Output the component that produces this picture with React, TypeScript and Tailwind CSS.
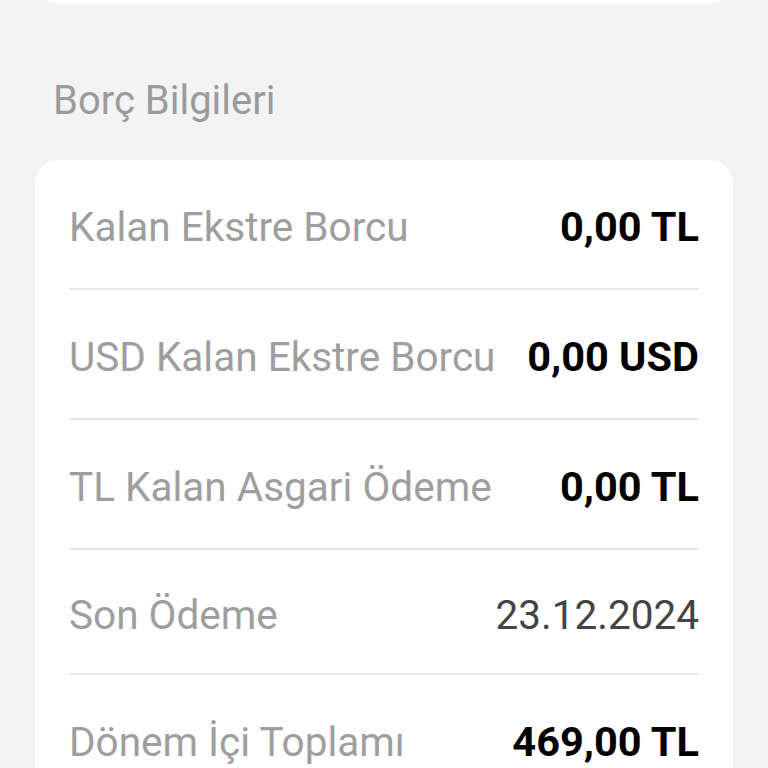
import React from "react";

type Row = { label: string; value: string; kind: "bold" | "plain"; h: string };

const rows: Row[] = [
  { label: "Kalan Ekstre Borcu", value: "0,00 TL", kind: "bold", h: "h-[128px]" },
  { label: "USD Kalan Ekstre Borcu", value: "0,00 USD", kind: "bold", h: "h-[128px]" },
  { label: "TL Kalan Asgari Ödeme", value: "0,00 TL", kind: "bold", h: "h-[128px]" },
  { label: "Son Ödeme", value: "23.12.2024", kind: "plain", h: "h-[123px]" },
  { label: "Dönem İçi Toplamı", value: "469,00 TL", kind: "bold", h: "h-[128px]" },
];

export default function App() {
  return (
    <div
      className="min-h-screen w-full overflow-hidden bg-[#f3f3f3]"
      style={{ fontFamily: "Roboto, 'Noto Sans', sans-serif" }}
    >
      <div className="mx-[35px] -mt-[40px] h-[43px] rounded-[24px] bg-white" />
      <div className="mt-[74px] pl-[53px] text-[40px] leading-[48px] text-[#9b9b9b]">
        Borç Bilgileri
      </div>
      <div className="mx-[35px] mt-[35px] rounded-[24px] bg-white px-[34px]">
        {rows.map((r, i) => (
          <div key={i}>
            {i > 0 && <div className="h-[2px] bg-[#e6e6e6]" />}
            <div className={`flex items-center justify-between pt-[6px] ${r.h}`}>
              <span className="whitespace-nowrap text-[40.5px] leading-[48px] text-[#9e9e9e]">
                {r.label}
              </span>
              {r.kind === "bold" ? (
                <span className="whitespace-nowrap text-[41.5px] font-bold leading-[50px] text-black">
                  {r.value}
                </span>
              ) : (
                <span className="whitespace-nowrap text-[40.5px] leading-[48px] text-[#444444]">
                  {r.value}
                </span>
              )}
            </div>
          </div>
        ))}
      </div>
    </div>
  );
}
